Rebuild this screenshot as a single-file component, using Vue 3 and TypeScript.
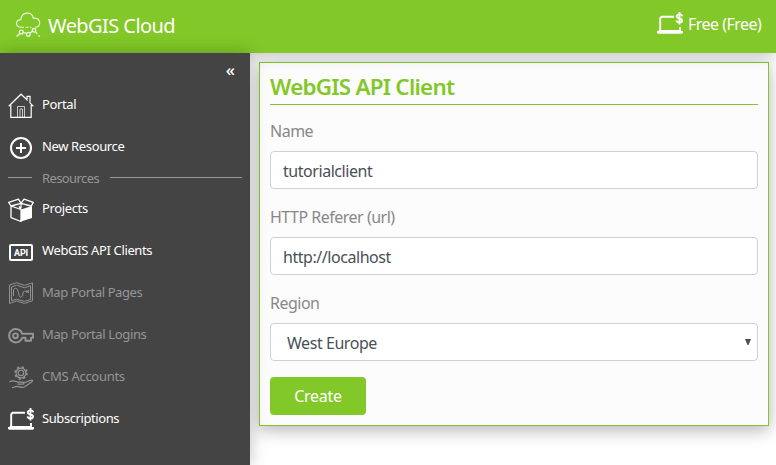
<script setup lang="ts">
import { ref } from 'vue'

interface MenuItem {
  label: string
  icon: string
  disabled?: boolean
}

const mainItems: MenuItem[] = [
  { label: 'Portal', icon: 'home' },
  { label: 'New Resource', icon: 'add' },
]
const resourceItems: MenuItem[] = [
  { label: 'Projects', icon: 'box' },
  { label: 'WebGIS API Clients', icon: 'api' },
  { label: 'Map Portal Pages', icon: 'map', disabled: true },
  { label: 'Map Portal Logins', icon: 'key', disabled: true },
  { label: 'CMS Accounts', icon: 'cms', disabled: true },
  { label: 'Subscriptions', icon: 'laptop' },
]

const clientName = ref('tutorialclient')
const referer = ref('http://localhost')
const region = ref('West Europe')
</script>

<template>
  <svg class="defs" width="0" height="0" aria-hidden="true">
    <symbol id="home" viewBox="0 0 26 26">
      <path d="M.7 13.300 13 1.200l6 5.600V3.300h3v6.500l3.400 3.500M2.800 12v12.400h20.400V12" fill="none" stroke="currentColor" stroke-width="1.200" />
      <path d="M9.500 24V13.500h7V24M12 24v-8h2.500v8" fill="none" stroke="currentColor" stroke-width="1" opacity=".7" />
    </symbol>
    <symbol id="add" viewBox="0 0 26 26">
      <circle cx="13" cy="13" r="10" fill="none" stroke="currentColor" stroke-width="2" />
      <path d="M13 8v10M8 13h10" stroke="currentColor" stroke-width="2" />
    </symbol>
    <symbol id="box" viewBox="0 0 26 26">
      <path d="m13 12.500 11-3.500v12L13 24.500z" fill="currentColor" />
      <path d="M3 9v11.600l10 3.900V12.500L3 9l10-2.700L23 9M3 9 .7 5.400 10.500 2.200l2.500 4.100 3-4.100 9.300 3.200L23 9.300M13 12.500l-2-3.200M13 6.300v5" fill="none" stroke="currentColor" stroke-width="1.300" stroke-linejoin="round" />
    </symbol>
    <symbol id="map" viewBox="0 0 26 26">
      <path d="m1.500 4 7-2.300 8 2.700 8-2.600v18l-8 2.600-8-2.400-7 2.400zM3.500 6l5-1.900 8 2.700 6-2v13.800l-6 1.800-8-2.200-5 1.500z" fill="none" stroke="currentColor" stroke-width=".95" />
      <path d="M5.500 15V8.500c3-3 4.500 0 5.300 4.800.8 4.700 3.800 3.400 4.300-1.300.4-3.300 2.500-1 4.900-1.500M18.500 9l2.500 3M21 9l-2.500 3" fill="none" stroke="currentColor" stroke-width="1" />
    </symbol>
    <symbol id="key" viewBox="0 0 26 26">
      <path d="M14.200 10.700H25v4h-2v3h-5.500v-3h-3.300a6.700 6.700 0 1 1 0-4z" fill="none" stroke="currentColor" stroke-width="1.900" stroke-linejoin="round" />
      <circle cx="7.500" cy="12.800" r="2.400" fill="none" stroke="currentColor" stroke-width="1.900" />
    </symbol>
    <symbol id="cms" viewBox="0 0 26 26">
      <circle cx="13" cy="8" r="2.700" fill="none" stroke="currentColor" stroke-width="1.100" />
      <circle cx="13" cy="8" r="4.900" fill="none" stroke="currentColor" stroke-width="1.200" />
      <circle cx="13" cy="8" r="6" fill="none" stroke="currentColor" stroke-width="1.500" stroke-dasharray="2.200 2.510" />
      <path d="M1.500 16.700c4-2.300 6-.2 8.500.5h4.500c2 0 2 2 0 2H9.700M15.500 18l7.500-2.700c1.700-.4 2 .8.900 1.400l-7.200 5c-3 1.900-5.300-.4-8-.4-2 0-2.700 1.300-4.700 1.300" fill="none" stroke="currentColor" stroke-width="1.200" />
    </symbol>
    <symbol id="laptop" viewBox="0 0 26 26">
      <path d="M17 5.800H4.500L3.200 7.300v11L2.500 20H23v-4" fill="none" stroke="currentColor" stroke-width="1.900" />
      <path d="M0 20h26v1.800l-1 1H1l-1-1z" fill="currentColor" />
      <path d="M25.300 5.400c-.3-1.400-1.300-2-2.700-2-3.500 0-3.800 3.300-.8 4l1.300.3c3 .8 2.500 3.900-.6 3.900-1.800 0-2.700-.8-3-2.200M22.500 1v12.600" fill="none" stroke="currentColor" stroke-width="1.900" />
    </symbol>
    <symbol id="cloud" viewBox="0 0 26 26">
      <path d="M9 15.300H6.200C-.2 15.300.4 7.500 6 7.600 6.300-.8 18-.8 18.200 6.100c8.400-.5 8.300 9.200 2 9.200M10.500 15.300h3M15 15.300h1.500" fill="none" stroke="currentColor" stroke-width="1.100" />
      <path d="m1.500 24.500 3.600-3.300M7.800 20.300l4 1.200M14.800 20.800l2.900-1.500M20.300 19.500l2 2.500M23.500 23.500l1.500 1" fill="none" stroke="currentColor" stroke-width="1.300" />
      <circle cx="6.300" cy="20" r="1.900" fill="none" stroke="currentColor" stroke-width="1.300" />
      <circle cx="13.300" cy="22.300" r="1.900" fill="none" stroke="currentColor" stroke-width="1.300" />
      <circle cx="19" cy="18.300" r="1.800" fill="none" stroke="currentColor" stroke-width="1.300" />
    </symbol>
  </svg>

  <div class="page">
    <header class="topbar">
      <div class="brand">
        <svg class="brand-icon"><use href="#cloud" /></svg>
        <span class="brand-name">WebGIS Cloud</span>
      </div>
      <div class="plan">
        <svg class="icon"><use href="#laptop" /></svg>
        <span class="plan-name">Free (Free)</span>
      </div>
    </header>

    <div class="body">
      <nav class="sidebar">
        <div class="collapse">«</div>
        <a v-for="item in mainItems" :key="item.label" class="item">
          <svg class="icon"><use :href="'#' + item.icon" /></svg>
          <span class="label">{{ item.label }}</span>
        </a>
        <div class="divider"><span>Resources</span></div>
        <a v-for="item in resourceItems" :key="item.label" class="item" :class="{ disabled: item.disabled }">
          <span v-if="item.icon === 'api'" class="api-icon">API</span>
          <svg v-else class="icon"><use :href="'#' + item.icon" /></svg>
          <span class="label" :class="'label-' + item.icon">{{ item.label }}</span>
        </a>
      </nav>

      <main class="content">
        <form class="card" @submit.prevent>
          <h1>WebGIS API Client</h1>
          <label for="name">Name</label>
          <input id="name" v-model="clientName" class="field" type="text" />
          <label for="referer">HTTP Referer (url)</label>
          <input id="referer" v-model="referer" class="field" type="text" />
          <label for="region">Region</label>
          <div class="select-wrap">
            <select id="region" v-model="region" class="field select">
              <option>West Europe</option>
            </select>
            <svg class="arrow" viewBox="0 0 6 6"><path d="M0 0h6L3.500 6h-1z" /></svg>
          </div>
          <button type="submit">Create</button>
        </form>
      </main>
    </div>
  </div>
</template>

<style>
body {
  background: #fff;
  overflow: hidden;
}
</style>

<style scoped>
.defs {
  position: absolute;
}
.page {
  width: 776px;
  height: 465px;
  display: flex;
  flex-direction: column;
  overflow: hidden;
  font-family: 'Segoe UI', 'Noto Sans', 'Open Sans', sans-serif;
}
.page * {
  box-sizing: border-box;
}
.topbar {
  height: 53px;
  flex: none;
  display: flex;
  justify-content: space-between;
  background: #82c828;
  color: #fff;
  box-shadow: 0 0 16px rgba(0, 0, 0, 0.3);
  z-index: 1;
}
.brand {
  display: flex;
  padding: 12px 0 0 15px;
}
.brand-icon {
  width: 26px;
  height: 26px;
  opacity: 0.85;
}
.brand-name {
  margin-left: 7px;
  font-size: 20px;
  line-height: 28px;
  letter-spacing: -0.57px;
  white-space: nowrap;
}
.plan {
  display: flex;
  width: 119px;
  padding-top: 11px;
}
.plan-name {
  margin-left: 5px;
  font-size: 16px;
  line-height: 26px;
  letter-spacing: -0.52px;
  white-space: nowrap;
}
.icon {
  width: 26px;
  height: 26px;
  flex: none;
}
.body {
  display: flex;
  flex: 1;
  min-height: 0;
}
.sidebar {
  width: 250px;
  flex: none;
  background: #444;
  color: #fff;
  font-size: 13px;
  z-index: 2;
  box-shadow: 0 0 16px rgba(0, 0, 0, 0.25);
}
.collapse {
  height: 32px;
  padding-right: 15px;
  text-align: right;
  font-size: 17px;
  font-weight: 500;
  line-height: 34px;
}
.item {
  height: 42px;
  display: flex;
  padding: 8px 0 0 8px;
  line-height: 22px;
  white-space: nowrap;
}
.label {
  margin-left: 8px;
  letter-spacing: -0.36px;
}
.label-map,
.label-laptop {
  letter-spacing: -0.42px;
}
.label-cms {
  letter-spacing: -0.28px;
}
.disabled {
  color: #969696;
}
.divider {
  height: 20px;
  display: flex;
  align-items: center;
  padding: 0 8px 2px;
  color: #969696;
}
.divider span {
  width: 58px;
  margin: 0 10px;
  line-height: 18px;
  letter-spacing: -0.6px;
}
.divider::before,
.divider::after {
  content: '';
  height: 1px;
  margin-top: -1px;
  background: #969696;
}
.divider::before {
  width: 24px;
}
.divider::after {
  flex: 1;
}
.api-icon {
  width: 24px;
  height: 17px;
  flex: none;
  margin: 5px 1px 0;
  border: 2px solid #fff;
  border-radius: 2px;
  font: 700 9px/14px Roboto, sans-serif;
  letter-spacing: -0.2px;
  text-align: center;
}
.content {
  flex: 1;
  padding: 9px 7px 0 9px;
}
.card {
  height: 364px;
  padding: 10px;
  display: flex;
  flex-direction: column;
  border: 1px solid #82c828;
  background: #fcfcfc;
  box-shadow: 0 4px 16px rgba(0, 0, 0, 0.3);
}
h1 {
  margin: 0 0 14px;
  height: 32px;
  border-bottom: 1px solid #82c828;
  color: #82c828;
  font-size: 22.400px;
  font-weight: 560;
  line-height: 28px;
  letter-spacing: -0.75px;
}
label {
  height: 24px;
  margin-bottom: 8px;
  color: #888;
  font-size: 16px;
  line-height: 24px;
  letter-spacing: -0.5px;
}
.field {
  width: 100%;
  height: 38px;
  flex: none;
  margin: 0 0 16px;
  padding: 1px 12px 0;
  border: 1px solid #ced0da;
  border-radius: 4px;
  outline: 0;
  background: #fff;
  color: #495057;
  font: 16px 'Segoe UI', 'Noto Sans', 'Open Sans', sans-serif;
  letter-spacing: -0.45px;
}
.select-wrap {
  position: relative;
  height: 54px;
}
.select {
  appearance: none;
  padding-left: 16px;
}
.arrow {
  position: absolute;
  right: 7px;
  top: 16px;
  width: 6px;
  height: 6px;
  fill: #495057;
}
button {
  width: 96px;
  height: 38px;
  flex: none;
  padding: 0;
  border: 0;
  border-radius: 4px;
  background: #82c828;
  color: #fff;
  font: 16px 'Segoe UI', 'Noto Sans', 'Open Sans', sans-serif;
  letter-spacing: -0.3px;
}
</style>
